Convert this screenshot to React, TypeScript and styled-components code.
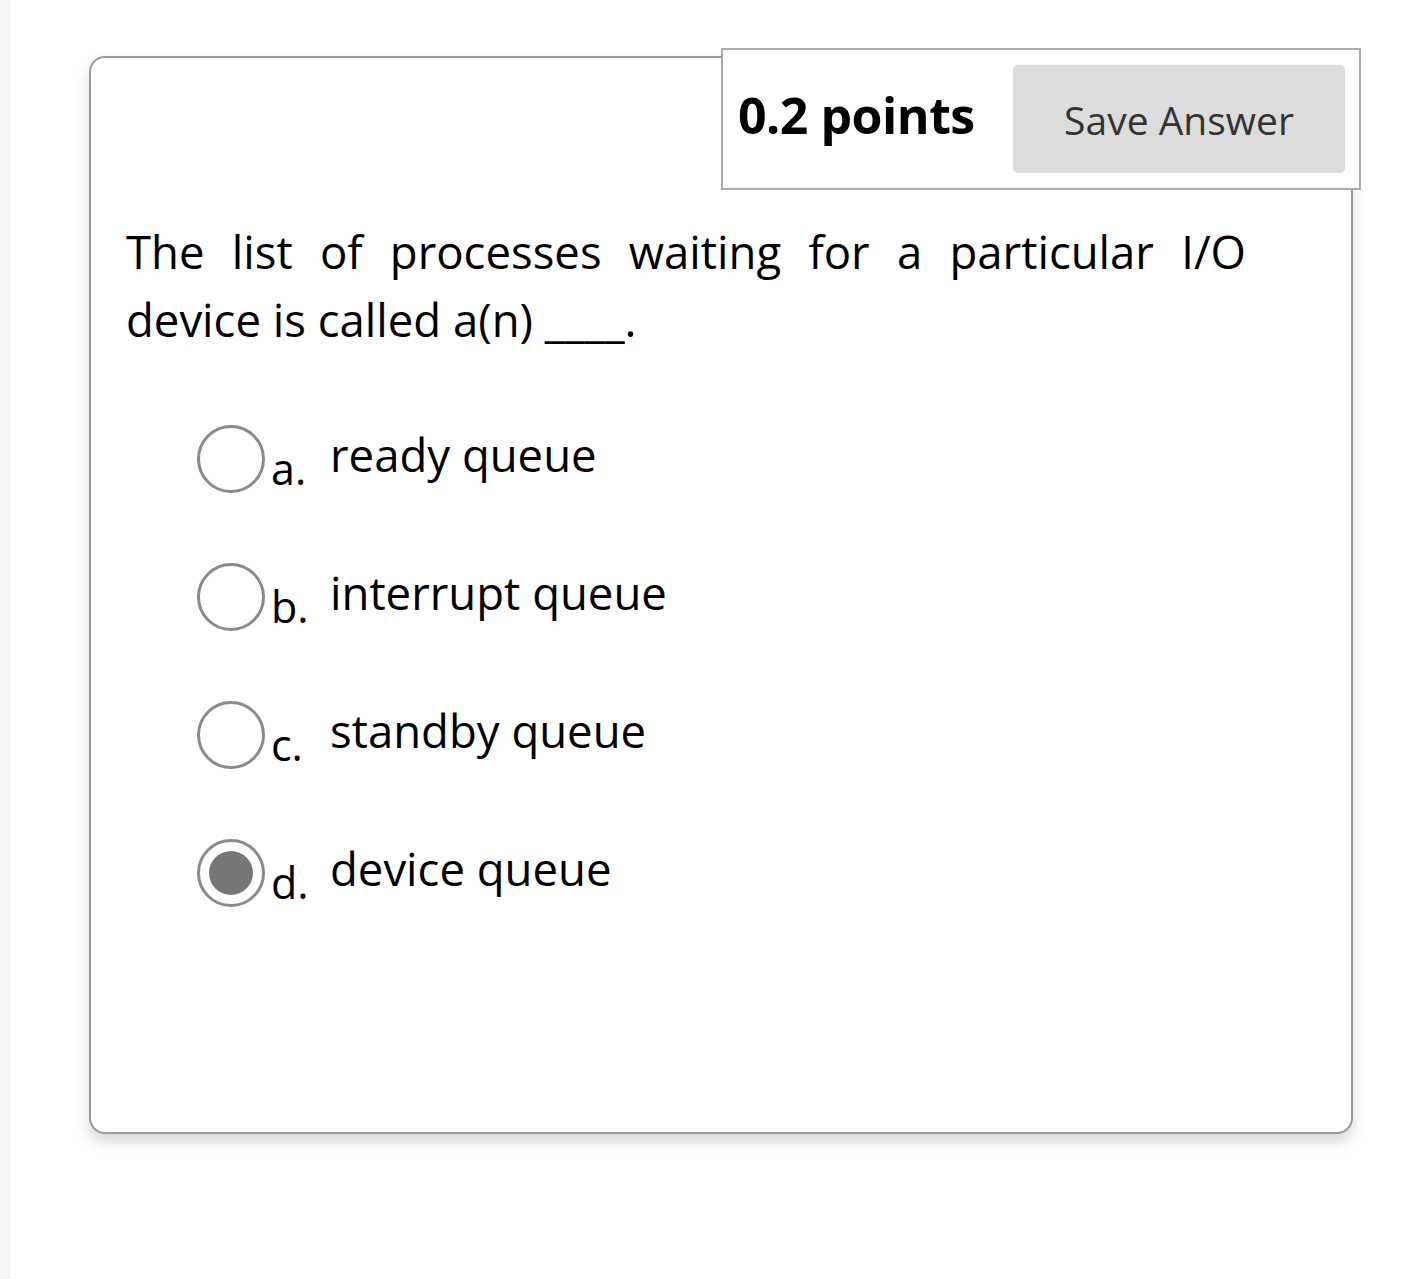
import React from "react";
import styled, { createGlobalStyle } from "styled-components";

const GlobalStyle = createGlobalStyle`
  html, body {
    margin: 0;
    padding: 0;
    background: #ffffff;
    font-family: "Open Sans", "Noto Sans", sans-serif;
    color: #000;
  }
`;

const Page = styled.div`
  display: flex;
  min-height: 1279px;
`;

const SideStrip = styled.div`
  width: 11px;
  flex: none;
  background: #f5f5f5;
`;

const Main = styled.div`
  flex: 1;
  padding: 56px 0 0 78px;
`;

const Card = styled.div`
  width: 1264px;
  height: 1078px;
  box-sizing: border-box;
  border: 2px solid #999999;
  border-radius: 16px;
  background: #fff;
  box-shadow: 0 8px 14px rgba(0, 0, 0, 0.16);
  display: flex;
  flex-direction: column;
`;

const Header = styled.div`
  align-self: flex-end;
  margin: -10px -10px 0 0;
  width: 640px;
  height: 142px;
  box-sizing: border-box;
  border: 2px solid #aaaaaa;
  background: #fff;
  display: flex;
  align-items: center;
  justify-content: space-between;
  padding: 0 14px 0 15px;
`;

const Points = styled.div`
  font-weight: 700;
  font-size: 50px;
  letter-spacing: -0.5px;
  margin-top: -9px;
`;

const SaveButton = styled.button`
  width: 332px;
  height: 108px;
  border: none;
  border-radius: 5px;
  background: #dcdcdc;
  color: #333333;
  font-family: inherit;
  font-size: 39px;
  padding: 0;
`;

const Question = styled.p`
  margin: 27px 0 0 35px;
  width: 1120px;
  font-size: 45.5px;
  line-height: 68px;
  text-align: justify;
`;

const Options = styled.div`
  margin: 72px 0 0 106px;
  display: flex;
  flex-direction: column;
  gap: 70px;
`;

const Option = styled.label`
  display: flex;
  align-items: center;
  height: 68px;
`;

const Radio = styled.span<{ $checked?: boolean }>`
  width: 68px;
  height: 68px;
  box-sizing: border-box;
  border-radius: 50%;
  border: 3px solid #8a8a8a;
  flex: none;
  display: flex;
  align-items: center;
  justify-content: center;
  &::after {
    content: "";
    width: 44px;
    height: 44px;
    border-radius: 50%;
    background: #777777;
    display: ${(p) => (p.$checked ? "block" : "none")};
  }
`;

const Letter = styled.span`
  font-size: 43px;
  margin: 18px 0 0 6px;
  width: 59px;
`;

const OptionText = styled.span`
  font-size: 45.5px;
  margin-top: -10px;
`;

const options = [
  { letter: "a.", text: "ready queue" },
  { letter: "b.", text: "interrupt queue" },
  { letter: "c.", text: "standby queue" },
  { letter: "d.", text: "device queue", checked: true },
];

const App = () => {
  return (
    <Page>
      <GlobalStyle />
      <SideStrip />
      <Main>
        <Card>
          <Header>
            <Points>0.2 points</Points>
            <SaveButton>Save Answer</SaveButton>
          </Header>
          <Question>
            The list of processes waiting for a particular I/O device is called a(n) ____.
          </Question>
          <Options>
            {options.map((o) => (
              <Option key={o.letter}>
                <Radio $checked={o.checked} />
                <Letter>{o.letter}</Letter>
                <OptionText>{o.text}</OptionText>
              </Option>
            ))}
          </Options>
        </Card>
      </Main>
    </Page>
  );
};

export default App;
